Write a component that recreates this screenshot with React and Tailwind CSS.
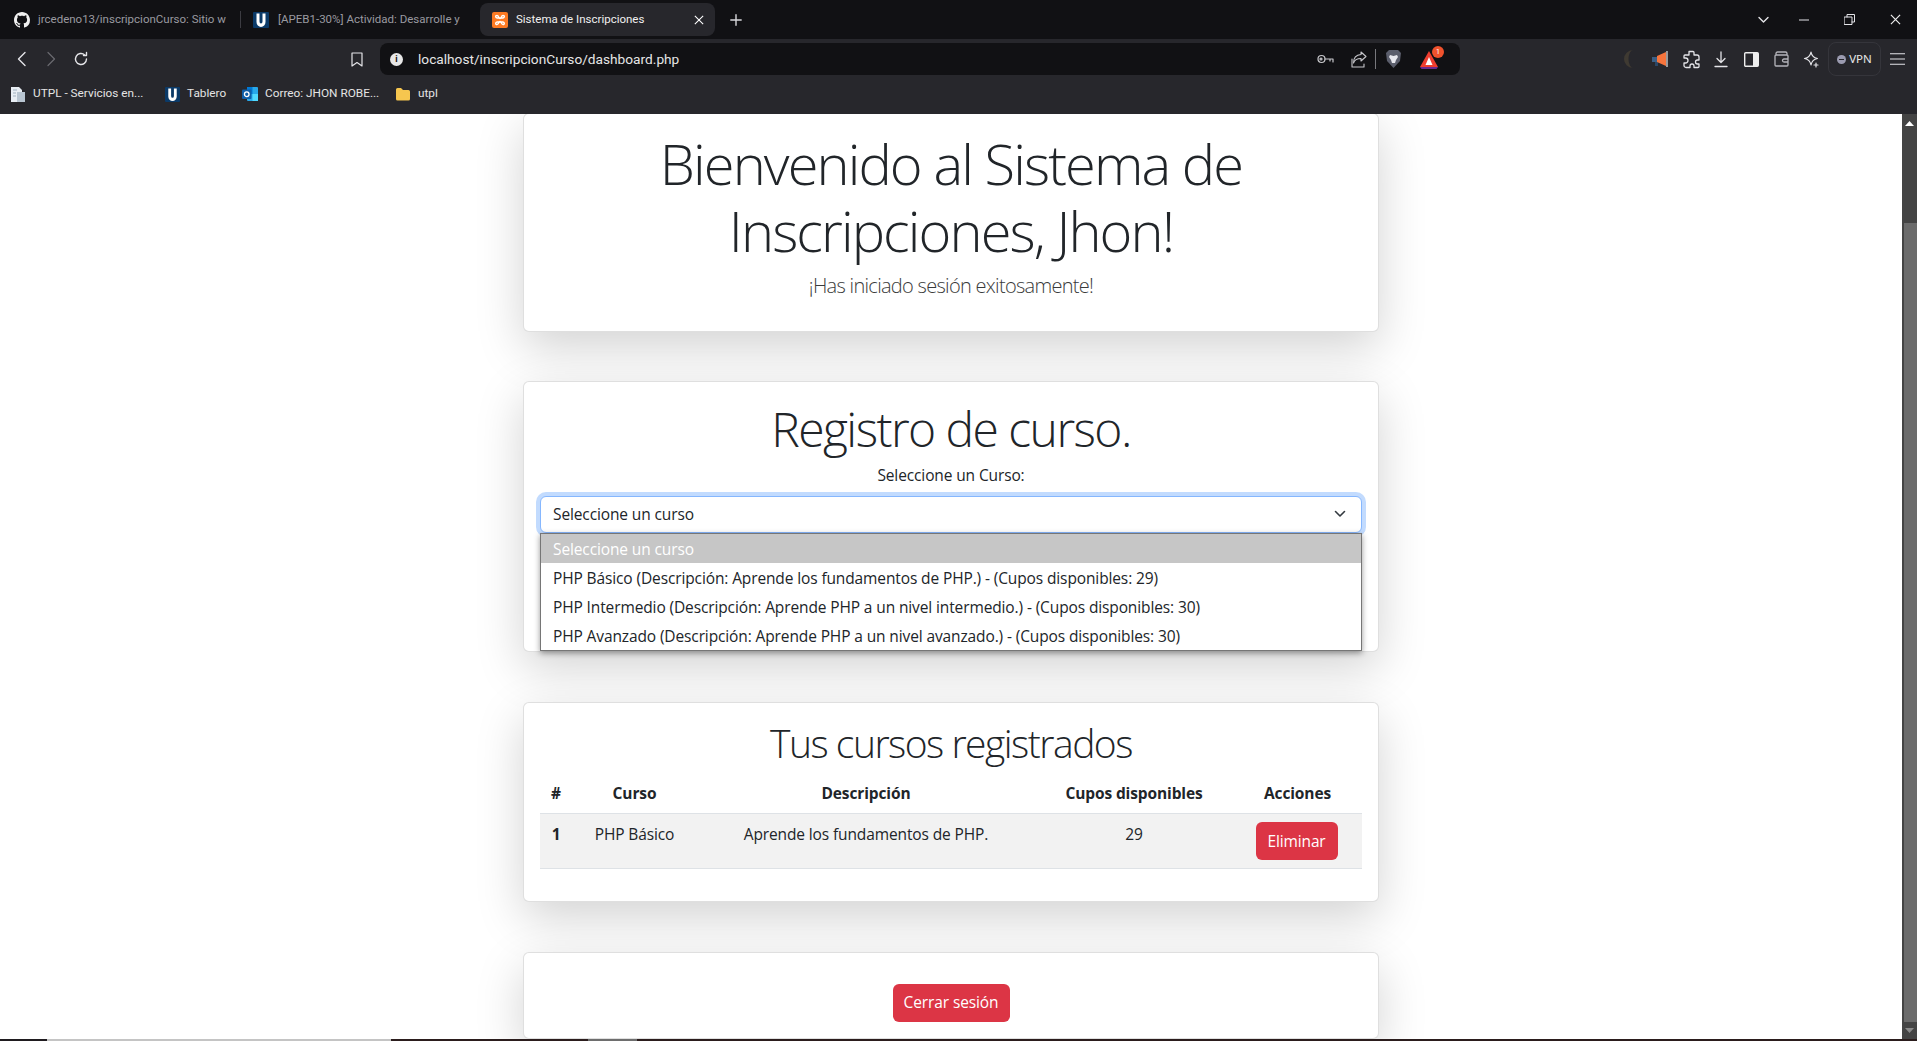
import React from "react";

const X = ({ s = 12 }) => (
  <svg width={s} height={s} viewBox="0 0 12 12" fill="none" stroke="currentColor" strokeWidth="1.3"><path d="M1 1l10 10M11 1L1 11" /></svg>
);

function Tab({ icon, label, active, w, iconClass }) {
  return (
    <div className={`flex items-center h-[33px] shrink-0 rounded-lg ${w} ${active ? "bg-[#27272c] text-[#f0f0f0]" : "text-[#9a9aa0]"}`}>
      <span className={`w-[17px] h-[17px] shrink-0 flex items-center justify-center ${iconClass}`}>{icon}</span>
      <span className="text-[11.5px] whitespace-nowrap flex-1">{label}</span>
      {active && <span className="mr-[11px] ml-2 text-white"><X s={10} /></span>}
    </div>
  );
}
const GitHub = () => (
  <svg width="16" height="16" viewBox="0 0 16 16" fill="#f0f0f0"><path d="M8 0C3.58 0 0 3.58 0 8c0 3.54 2.29 6.53 5.47 7.59.4.07.55-.17.55-.38 0-.19-.01-.82-.01-1.49-2.01.37-2.53-.49-2.69-.94-.09-.23-.48-.94-.82-1.13-.28-.15-.68-.52-.01-.53.63-.01 1.08.58 1.23.82.72 1.21 1.87.87 2.33.66.07-.52.28-.87.51-1.07-1.78-.2-3.64-.89-3.64-3.95 0-.87.31-1.59.82-2.15-.08-.2-.36-1.02.08-2.12 0 0 .67-.21 2.2.82.64-.18 1.32-.27 2-.27s1.36.09 2 .27c1.53-1.04 2.2-.82 2.2-.82.44 1.1.16 1.92.08 2.12.51.56.82 1.27.82 2.15 0 3.07-1.87 3.75-3.65 3.95.29.25.54.73.54 1.48 0 1.07-.01 1.93-.01 2.2 0 .21.15.46.55.38A8.01 8.01 0 0016 8c0-4.42-3.58-8-8-8z" /></svg>
);
const ULogo = ({ s = 16 }) => (
  <svg width={s} height={s} viewBox="0 0 16 16"><rect width="16" height="16" rx="1" fill="#0b3a68" /><path d="M3.5 1.5h3v8a1.5 2 0 003 0v-8h3v8.5a4.5 5 0 01-9 0z" fill="#fff" /></svg>
);
const Xampp = () => (
  <svg width="16" height="16" viewBox="0 0 16 16"><rect width="16" height="16" rx="2" fill="#fb7a24" /><path d="M5 3.5c2 0 1.5 3 3 3s1-3 3-3 1.5 2 0 2.5M5 12.5c2 0 1.5-3 3-3s1 3 3 3 1.5-2 0-2.5M5 3.5c-2 0-1.5 2 0 2.5M5 12.5c-2 0-1.5-2 0-2.5M5 6h6M5 10h6" fill="none" stroke="#fff" strokeWidth="1.4" /></svg>
);
const Doc = () => (
  <svg width="16" height="17" viewBox="0 0 16 17"><path d="M1 1h8l3 3v12H1z" fill="#e8eef4" /><path d="M7 6h8v10H7z" fill="#b9c6d2" /><path d="M3 4h4M3 7h3M3 10h3" stroke="#9fb0bf" /></svg>
);
const Outlook = () => (
  <svg width="16" height="16" viewBox="0 0 16 16"><rect x="5" y="1" width="11" height="14" rx="1" fill="#28a8ea" /><rect x="5" y="1" width="5.5" height="7" fill="#0078d4" /><rect x="10.5" y="8" width="5.5" height="7" fill="#50d9ff" /><rect y="3.5" width="9.5" height="9.5" rx="1" fill="#0f5ea8" /><circle cx="4.75" cy="8.25" r="2.3" fill="none" stroke="#fff" strokeWidth="1.3" /></svg>
);
const Folder = () => (
  <svg width="16" height="14" viewBox="0 0 16 14"><path d="M1 2.5A1.5 1.5 0 012.5 1H6l2 2h5.5A1.5 1.5 0 0115 4.5V12a1.5 1.5 0 01-1.5 1.5h-11A1.5 1.5 0 011 12z" fill="#f6c64f" /></svg>
);
const Ico = ({ children, w = 18, h = 18, vb = "0 0 18 18", sw = 1.3, c = "#e4e4e8" }) => (
  <svg width={w} height={h} viewBox={vb} fill="none" stroke={c} strokeWidth={sw} strokeLinecap="round" strokeLinejoin="round">{children}</svg>
);
const Slot = ({ w, children }) => <div className={`flex items-center justify-center shrink-0 ${w}`}>{children}</div>;

function TabBar() {
  return (
    <div className="h-[39px] bg-[#111114] flex items-center text-[#e8e8e8]">
      <div className="w-[240px] shrink-0 relative">
        <Tab w="w-[240px]" iconClass="ml-[13px] mr-[8px]" icon={<GitHub />} label="jrcedeno13/inscripcionCurso: Sitio w" />
      </div>
      <div className="w-px h-[17px] bg-[#3c3c42] shrink-0" />
      <div className="w-[239px] shrink-0">
        <Tab w="w-[239px]" iconClass="ml-[11px] mr-[9px]" icon={<ULogo />} label="[APEB1-30%] Actividad: Desarrolle y" />
      </div>
      <Tab w="w-[235px]" active iconClass="ml-[11px] mr-[8px]" icon={<Xampp />} label="Sistema de Inscripciones" />
      <Slot w="w-[42px]"><span className="text-[#d8d8dc]"><Ico w={12} h={12} vb="0 0 12 12" c="currentColor" sw={1.4}><path d="M6 .8v10.4M.8 6h10.4" /></Ico></span></Slot>
      <div className="flex-1" />
      <Slot w="w-[24px]"><Ico w={11} h={8} vb="0 0 11 8" sw={1.4}><path d="M1 1.5l4.5 4.5L10 1.5" /></Ico></Slot>
      <div className="w-[9px]" />
      <Slot w="w-[40px]"><Ico w={10} h={2} vb="0 0 10 2" sw={1}><path d="M0 1h10" /></Ico></Slot>
      <Slot w="w-[50px]"><Ico w={11} h={11} vb="0 0 11 11" sw={1}><path d="M.5 3H8v7.5H.5zM3 3V.5h7.5V8H8" /></Ico></Slot>
      <Slot w="w-[43px]"><span className="text-[#eee]"><X s={11} /></span></Slot>
    </div>
  );
}

function AddressBar() {
  return (
    <div className="h-[43px] flex items-center bg-[#27272c] pb-[3px]">
      <Slot w="w-[43px]"><Ico w={10} h={16} vb="0 0 10 16" sw={1.4}><path d="M8 1.5L1.5 8 8 14.5" /></Ico></Slot>
      <Slot w="w-[15px]"><Ico w={10} h={16} vb="0 0 10 16" sw={1.2} c="#6a6a70"><path d="M2 1.5L8.5 8 2 14.5" /></Ico></Slot>
      <Slot w="w-[46px]"><Ico w={16} h={16} vb="0 0 16 16" sw={1.4}><path d="M13.5 8a5.5 5.5 0 11-1.8-4.1M13.5 1.5v3h-3" /></Ico></Slot>
      <div className="w-[276px] flex justify-end pr-[17px] shrink-0"><Ico w={12} h={15} vb="0 0 12 15" sw={1.2}><path d="M1 1h10v13L6 10.5 1 14z" /></Ico></div>
      <div className="w-[1080px] h-[32px] rounded-lg bg-[#111114] flex items-center shrink-0">
        <div className="ml-[10px] w-[13px] h-[13px] rounded-full bg-[#e8e8e8] text-[#111] text-[9px] leading-[13px] text-center font-bold">i</div>
        <span className="ml-[15px] text-[13.7px] text-[#e6e6e6] flex-1">localhost/inscripcionCurso/dashboard.php</span>
        <Ico w={17} h={12} vb="0 0 17 12" sw={1.2} c="#c8c8cc"><circle cx="4.5" cy="6" r="3.5" /><circle cx="4" cy="6" r="1" /><path d="M8 6h8v3M13 6v2" /></Ico>
        <div className="ml-[17px]"><Ico w={16} h={17} vb="0 0 16 17" sw={1.1} c="#c8c8cc"><path d="M10 1l5 4.5-5 4.5V7.5C6 7.5 3.5 9 2.5 12 2.5 7.5 5 3.8 10 3.5zM1 8v8h12v-3" /></Ico></div>
        <div className="ml-[8px] w-px h-[20px] bg-[#77777c]" />
        <div className="ml-[9px]">
          <svg width="17" height="20" viewBox="0 0 17 20"><path d="M4 1h9l3 3-1 8-6.5 7L2 12 1 4z" fill="#5b5e6c" /><path d="M5 6l3.5 1L12 6l1 2-2 3-1 3H7l-1-3-2-3z" fill="#e8e8ee" /></svg>
        </div>
        <div className="ml-[17px] relative w-[20px] h-[20px]">
          <svg width="20" height="18" viewBox="0 0 20 18" className="mt-[2px]"><path d="M10 0l9 16H1z" fill="#ef3d2f" /><path d="M1 16h18l-1.5 2h-15z" fill="#6b2a8f" /><path d="M10 6l3.5 8h-7z" fill="#fff" /></svg>
          <span className="absolute -top-[3px] -right-[5px] w-[12px] h-[12px] rounded-full bg-[#f0522d] text-white text-[7px] leading-[12px] text-center">1</span>
        </div>
        <div className="w-[21px]" />
      </div>
      <div className="w-[160px] shrink-0" />
      <Slot w="w-[20px]"><svg width="16" height="20" viewBox="0 0 16 20"><path d="M11 1a9 9 0 100 18A4.5 9 0 0111 1z" fill="#3f3a32" /></svg></Slot>
      <Slot w="w-[40px]"><svg width="16" height="18" viewBox="0 0 16 18"><path d="M0 7h5v5H0z" fill="#3a5f86" /><path d="M3 12h3v4H3z" fill="#2b4766" /><path d="M5 6l9-4v14l-9-4z" fill="#f6743c" /><path d="M15 1v16" stroke="#e8e8e8" strokeWidth="1.2" /></svg></Slot>
      <Slot w="w-[22px]"><Ico w={17} h={19} vb="0 0 17 19"><path d="M6 1.5h4a1 1 0 011 1V5h3a2 2 0 012 2v3h-1.5a2 2 0 000 4H16v2.5a1 1 0 01-1 1h-4V16a2 2 0 00-4 0v1.5H3a2 2 0 01-2-2V13h1.5a2.5 2.5 0 000-5H1V6a1 1 0 011-1h4z" /></Ico></Slot>
      <Slot w="w-[38px]"><Ico w={14} h={17} vb="0 0 14 17" sw={1.3}><path d="M7 1v10M3 7.5L7 11.5l4-4M1 15.5h12" /></Ico></Slot>
      <Slot w="w-[22px]"><svg width="15" height="15" viewBox="0 0 15 15"><rect x=".7" y=".7" width="13.6" height="13.6" rx="1" fill="none" stroke="#eee" strokeWidth="1.4" /><rect x="9" y="1" width="5" height="13" fill="#eee" /></svg></Slot>
      <Slot w="w-[38px]"><Ico w={15} h={16} vb="0 0 15 16" c="#b4b4ba" sw={1.3}><path d="M2 4V2.5A1.5 1.5 0 013.5 1h8A1.5 1.5 0 0113 2.5V4M1 5a1 1 0 011-1h11a1 1 0 011 1v9a1 1 0 01-1 1H2a1 1 0 01-1-1zM14 8h-4a1.5 1.5 0 000 3h4" /></Ico></Slot>
      <Slot w="w-[22px]"><Ico w={16} h={17} vb="0 0 16 17" sw={1.2}><path d="M8 1c.7 4 2.5 5.800 6.5 6.5C10.500 8.200 8.700 10 8 14 7.300 10 5.500 8.200 1.500 7.500 5.500 6.800 7.300 5 8 1zM13 12v4M11 14h4" /></Ico></Slot>
      <div className="w-[6px] shrink-0" />
      <div className="w-[53px] h-[34px] shrink-0 rounded-lg border border-[#35353b] flex items-center justify-center gap-[3px]">
        <span className="w-[9px] h-[9px] rounded-full bg-[#9b9bb0] flex items-center justify-center"><span className="w-[5px] h-px bg-[#27272c]" /></span>
        <span className="text-[11.5px] text-[#e8e8e8] font-['Noto_Sans',sans-serif]">VPN</span>
      </div>
      <Slot w="w-[33px]"><Ico w={15} h={12} vb="0 0 15 12" sw={1.1}><path d="M0 .7h15M0 6h15M0 11.3h15" /></Ico></Slot>
    </div>
  );
}

function Bookmark({ icon, label, w }) {
  return (
    <div className={`flex items-center shrink-0 ${w}`}>
      <span className="w-[16px] flex justify-center mr-[7px] shrink-0">{icon}</span>
      <span className="text-[11.8px] text-[#e4e4e4] whitespace-nowrap">{label}</span>
    </div>
  );
}

function BookmarksBar() {
  return (
    <div className="h-[32px] bg-[#27272c] flex items-center pl-[10px] pb-[8px]">
      <Bookmark w="w-[154px]" icon={<Doc />} label="UTPL - Servicios en..." />
      <Bookmark w="w-[78px]" icon={<ULogo s={15} />} label="Tablero" />
      <Bookmark w="w-[153px]" icon={<Outlook />} label="Correo: JHON ROBE..." />
      <Bookmark w="w-[50px]" icon={<Folder />} label="utpl" />
    </div>
  );
}

const Card = ({ className = "", children }) => (
  <section className={`w-[856px] mx-auto bg-white border border-[#00000020] rounded-md shadow-[0_16px_48px_rgba(0,0,0,0.175)] ${className}`}>{children}</section>
);

function Dropdown() {
  const opts = [
    "PHP Básico (Descripción: Aprende los fundamentos de PHP.) - (Cupos disponibles: 29)",
    "PHP Intermedio (Descripción: Aprende PHP a un nivel intermedio.) - (Cupos disponibles: 30)",
    "PHP Avanzado (Descripción: Aprende PHP a un nivel avanzado.) - (Cupos disponibles: 30)",
  ];
  return (
    <div className="absolute left-0 right-0 top-[37px] bg-white border border-[#767676] shadow-[0_2px_6px_rgba(0,0,0,0.4)] text-[15.5px] text-[#212529]">
      <div className="h-[29px] bg-[#c6c6c6] text-white pl-[12px] leading-[30px]">Seleccione un curso</div>
      {opts.map((o) => (
        <div key={o} className="h-[29px] pl-[12px] leading-[31px] whitespace-nowrap">{o}</div>
      ))}
    </div>
  );
}

function Page() {
  const thC = "font-bold pb-[8px] pt-[8px] text-center text-[15.5px]";
  const td = "p-[8px] align-top text-center pt-[9px] font-normal";
  return (
    <div className="flex-1 min-w-0 h-full overflow-hidden bg-white font-['Open_Sans',sans-serif] text-[#212529] tracking-[-0.12px]">
      <Card className="-mt-[1px] px-[16px] pt-[16px] h-[219px] text-center">
        <h1 className="text-[56px] leading-[67.2px] font-light mx-auto tracking-[-1.9px]">Bienvenido al Sistema de Inscripciones, Jhon!</h1>
        <p className="mt-[7px] text-[20px] leading-[30px] font-light text-[#3a3a3a] tracking-[-0.7px]">¡Has iniciado sesión exitosamente!</p>
      </Card>

      <Card className="mt-[49px] px-[16px] pt-[18px] h-[271px] text-center">
        <h2 className="text-[48px] leading-[57.6px] font-light tracking-[-1.55px]">Registro de curso.</h2>
        <label className="block mt-[5px] text-[15.5px] leading-[24px]">Seleccione un Curso:</label>
        <div className="relative mt-[9px] text-left">
          <div className="h-[37px] rounded-md border border-[#86b7fe] shadow-[0_0_0_4px_rgba(13,110,253,0.25)] flex items-center justify-between pl-[12px] pr-[15px] bg-white text-[15.5px]">
            <span className="pt-[2px]">Seleccione un curso</span>
            <svg width="12" height="8" viewBox="0 0 12 8" fill="none" stroke="#343a40" strokeWidth="1.6" strokeLinecap="round" strokeLinejoin="round"><path d="M1.5 1.5L6 6l4.5-4.5" /></svg>
          </div>
          <Dropdown />
        </div>
      </Card>

      <Card className="mt-[50px] px-[16px] pt-[16px] h-[200px]">
        <h2 className="text-[39px] leading-[48px] font-light text-center tracking-[-1.5px]">Tus cursos registrados</h2>
        <table className="w-full table-fixed mt-[7px] border-collapse text-[15.5px]">
          <colgroup>
            <col className="w-[32px]" /><col className="w-[125px]" /><col className="w-[338px]" /><col className="w-[198px]" /><col />
          </colgroup>
          <thead>
            <tr className="border-b border-[#dee2e6] h-[35px]">
              <th className={thC}>#</th><th className={thC}>Curso</th><th className={thC}>Descripción</th><th className={thC}>Cupos disponibles</th><th className={thC}>Acciones</th>
            </tr>
          </thead>
          <tbody>
            <tr className="bg-[#f2f2f2] border-b border-[#dee2e6]">
              <th className="p-[8px] pt-[9px] align-top text-center">1</th>
              <td className={td}>PHP Básico</td>
              <td className={td}>Aprende los fundamentos de PHP.</td>
              <td className={td}>29</td>
              <td className="pl-[7px] pr-[9px] py-[8px] align-top text-center">
                <button className="w-[82px] h-[38px] bg-[#dc3545] text-white rounded-md">Eliminar</button>
              </td>
            </tr>
          </tbody>
        </table>
      </Card>

      <Card className="mt-[50px] pt-[31px] pb-[16px] flex justify-center">
        <button className="w-[117px] h-[38px] bg-[#dc3545] text-white rounded-md text-[15.5px]">Cerrar sesión</button>
      </Card>
    </div>
  );
}

function Scrollbar() {
  return (
    <div className="w-[15px] shrink-0 bg-[#444444] flex flex-col items-center">
      <svg width="9" height="5" viewBox="0 0 9 5" className="mt-[7px] shrink-0"><path d="M4.5 0L9 5H0z" fill="#fff" /></svg>
      <div className="w-[13px] h-[799px] mt-[97px] bg-[#6b6b6b] ml-[2px] shrink-0" />
      <svg width="9" height="5" viewBox="0 0 9 5" className="mt-[6px] shrink-0"><path d="M0 0h9L4.5 5z" fill="#8a8a8a" /></svg>
    </div>
  );
}

export default function App() {
  return (
    <div className="w-[1917px] h-[1041px] overflow-hidden flex flex-col font-['Roboto',sans-serif] bg-white">
      <TabBar />
      <AddressBar />
      <BookmarksBar />
      <div className="flex-1 min-h-0 flex">
        <Page />
        <Scrollbar />
      </div>
      <div className="h-[2px] flex bg-[#2b1d1d] shrink-0">
        <div className="w-[47px] bg-[#1f1b1f]" />
        <div className="w-[344px] bg-[#c4c4c4]" />
        <div className="w-[197px]" />
        <div className="w-[49px] bg-[#6e6e6e]" />
      </div>
    </div>
  );
}
